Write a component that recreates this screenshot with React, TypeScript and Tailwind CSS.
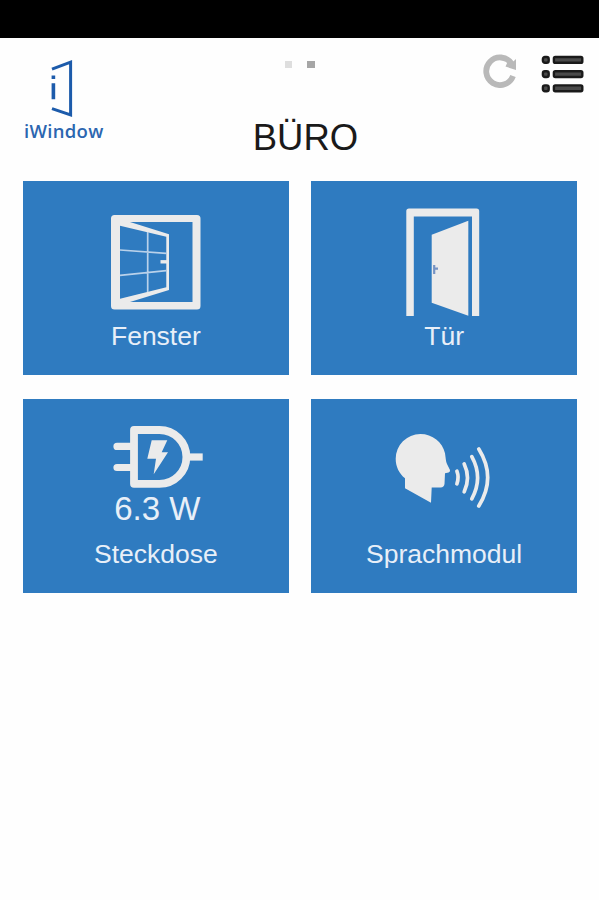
import type { ReactNode } from "react";

const LogoIcon = () => (
  <svg width="22" height="58" viewBox="0 0 22 58" fill="none" stroke="#1c5bab">
    <path d="M1 9.2 L19.6 2.2 V55 L1 48.6" strokeWidth="3" />
    <path d="M2.4 15.5 V19 M2.4 23.3 V39.3" strokeWidth="3.6" />
  </svg>
);

const RefreshIcon = () => (
  <svg width="34" height="34" viewBox="0 0 34 34">
    <path
      d="M30 22 A13.8 13.8 0 1 1 28.4 9.4"
      fill="none"
      stroke="#b9b9b9"
      strokeWidth="5.8"
    />
    <path d="M33 5 V16 L22.5 12.6 L25.5 6 L30 7.8 Z" fill="#b9b9b9" />
  </svg>
);

const ListIcon = () => (
  <svg width="43" height="38" viewBox="0 0 43 38" fill="#4a4a4a" stroke="#1a1a1a" strokeWidth="2.4">
    {[2, 16.2, 30.4].map((y) => (
      <g key={y}>
        <rect x="1.9" y={y} width="5.8" height="5.8" rx="2" />
        <rect x="12.9" y={y} width="28.4" height="5.8" rx="1.4" />
      </g>
    ))}
  </svg>
);

const WindowIcon = () => (
  <svg width="90" height="95" viewBox="0 0 90 95">
    <path
      fillRule="evenodd"
      fill="#ebebeb"
      d="M3.5 0 H86 Q89.5 0 89.5 3.5 V91 Q89.5 94.5 86 94.5 H3.5 Q0 94.5 0 91 V3.5 Q0 0 3.5 0 Z M19 7 L58 19.3 V75 L19 87 H81.5 V7 Z M9 10.7 V83.7 L55.3 72.3 V21.7 Z"
    />
    <path
      d="M36.7 17 V77 M9 35 L55.3 38.3 M9 60.3 L55.3 55.7"
      stroke="#b9d1ea"
      strokeWidth="1.7"
    />
    <path d="M49.5 46.8 H56" stroke="#ebebeb" strokeWidth="3.4" />
  </svg>
);

const DoorIcon = () => (
  <svg width="74" height="108" viewBox="0 0 74 108" fill="#ebebeb">
    <path d="M0.3 108 V3 Q0.3 0.5 3 0.5 H70.5 Q73.2 0.5 73.2 3 V108 H66 V8.5 H7.8 V108 Z" />
    <path d="M25.7 26.7 L62.3 12.7 V107.7 L25.7 94.7 Z" />
    <path d="M28.2 57 V66 M28 60.6 H32" stroke="#7593c4" strokeWidth="2.2" />
  </svg>
);

const PlugIcon = () => (
  <svg width="90" height="62" viewBox="0 0 90 62" fill="none" stroke="#ebebeb">
    <path
      d="M21 4 H46.5 A26.9 26.9 0 0 1 46.5 57.8 H21 Z"
      strokeWidth="7.8"
      strokeLinejoin="round"
    />
    <path d="M4 20.4 H18 M4 41.5 H18" strokeWidth="7.2" strokeLinecap="round" />
    <path d="M75 31 H89.7" strokeWidth="7.2" />
    <path
      d="M38.7 14.3 H54.3 L48.7 26.3 H55 L40.7 48.3 L43 32.7 H34.3 Z"
      fill="#ebebeb"
      stroke="none"
    />
  </svg>
);

const SpeechIcon = () => (
  <svg width="96" height="76" viewBox="0 0 96 76">
    <path
      fill="#ebebeb"
      d="M10 55.3 V45.3 C4 40.5 0.7 33.5 0.7 25.7 A24.7 24.7 0 0 1 25.3 1 C37.5 1 47.5 9 50 20.3 C50.8 25.5 50.8 28.5 52 31 L55 37 Q55.4 38.8 53.6 39.4 L50 40.3 L49.5 51 Q49 54.4 45.7 54.6 H36.7 L36 69.7 Z"
    />
    <g fill="none" stroke="#ebebeb" strokeWidth="3.7" strokeLinecap="round">
      <path d="M61.9 38.2 Q64.3 44.5 61.9 50.8" />
      <path d="M69.2 31 Q75.8 44.8 69.2 58.8" />
      <path d="M76.8 23.6 Q88.4 44.6 76.8 65.8" />
      <path d="M83.8 16 Q101.6 44.6 83.8 73" />
    </g>
  </svg>
);

type TileProps = {
  label: string;
  value?: string;
  iconClass: string;
  children: ReactNode;
};

const Tile = ({ label, value, iconClass, children }: TileProps) => (
  <button className="flex h-[194px] flex-col items-center bg-[#2f7bc0] pb-[23px] text-[#e8eff8]">
    <div className={iconClass}>{children}</div>
    {value && <div className="pl-[3px] text-[33px] leading-[42px]">{value}</div>}
    <div className="mt-auto text-[26.5px] leading-8">{label}</div>
  </button>
);

export default function App() {
  return (
    <div className="h-[900px] w-[599px] overflow-hidden bg-[#fefefe] font-['Liberation_Sans',Arial,sans-serif]">
      <div className="h-[37.5px] bg-black" />

      <header className="flex h-[143.5px] justify-between">
        <div className="flex w-[200px] flex-col items-start pt-[22.5px] pl-6">
          <div className="ml-[27px]">
            <LogoIcon />
          </div>
          <span className="mt-px font-['Open_Sans',sans-serif] text-[18.5px] leading-6 font-semibold tracking-[0.3px] text-[#2c66b0]">
            iWindow
          </span>
        </div>

        <div className="flex w-[199px] flex-col items-center pt-[23px]">
          <div className="flex gap-[15px]">
            <span className="size-[7.5px] bg-[#dedede]" />
            <span className="size-[7.5px] bg-[#a6a6a6]" />
          </div>
          <h1 className="mt-[49px] pl-3 text-[36.5px] leading-[42px] text-[#1a1a1a]">BÜRO</h1>
        </div>

        <div className="flex w-[200px] items-start justify-end gap-6 pt-[16.5px] pr-[15px]">
          <RefreshIcon />
          <div className="pt-px">
            <ListIcon />
          </div>
        </div>
      </header>

      <main className="grid grid-cols-2 gap-x-[22.5px] gap-y-[23.5px] pr-[22px] pl-[23px]">
        <Tile label="Fenster" iconClass="mt-[34px]">
          <WindowIcon />
        </Tile>
        <Tile label="Tür" iconClass="mt-[27px] mr-[3px]">
          <DoorIcon />
        </Tile>
        <Tile label="Steckdose" value="6.3 W" iconClass="mt-[27.5px] ml-[4px]">
          <PlugIcon />
        </Tile>
        <Tile label="Sprachmodul" iconClass="mt-[34.5px] mr-[3px]">
          <SpeechIcon />
        </Tile>
      </main>
    </div>
  );
}
